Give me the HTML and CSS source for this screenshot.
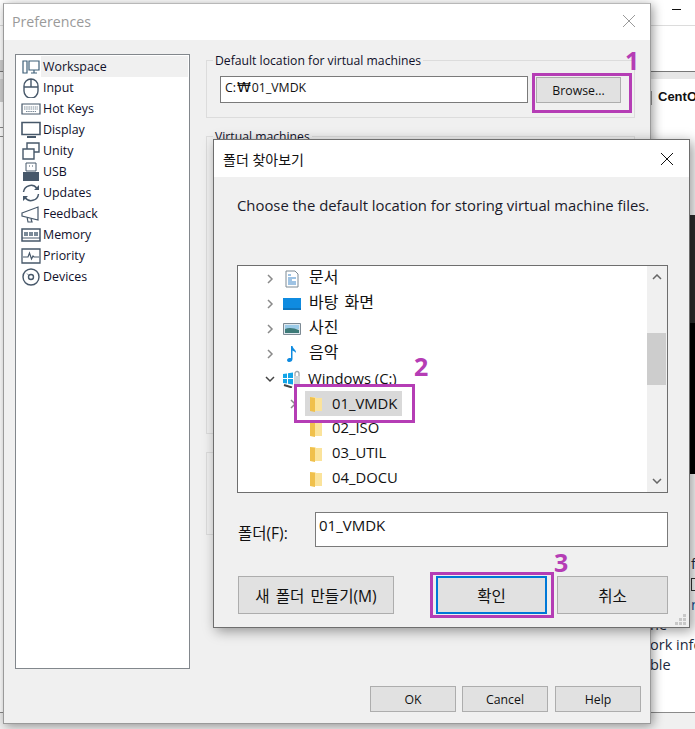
FILE: index.html
```html
<!DOCTYPE html>
<html lang="ko">
<head>
<meta charset="utf-8">
<title>Preferences</title>
<link rel="stylesheet" href="styles.css">
</head>
<body>
<div class="desktop">

  <div class="backwin">
    <div class="back-title"><span class="back-min"></span></div>
    <div class="back-toolbar"></div>
    <div class="back-band"></div>
    <div class="back-content">
      <div class="back-vm"><span class="back-tick"></span><b>CentOS</b></div>
      <div class="back-dark"></div>
      <div class="back-black"></div>
      <div class="back-edge back-f">f</div>
      <div class="back-edge back-box"></div>
      <div class="back-edge back-n">n</div>
      <div class="back-text">ne</div>
      <div class="back-text">ork info</div>
      <div class="back-text">ble</div>
    </div>
  </div>

  <section class="prefs">
    <header class="prefs-title">
      <span>Preferences</span>
      <svg class="x" width="14" height="14" viewBox="0 0 14 14"><path d="M1 1l12 12M13 1L1 13" stroke="#9a9a9a" fill="none"/></svg>
    </header>
    <div class="prefs-body">
      <div class="prefs-top">
        <ul class="side">
          <li class="side-row current"><svg class="si" viewBox="0 0 20 20"><path d="M2 4h4v12H2zM8 4h10v9H8zM13 13v3M10 16h6" fill="none" stroke="#3f6079" stroke-width="1.2"/></svg><span class="side-label">Workspace</span></li>
          <li class="side-row"><svg class="si" viewBox="0 0 20 20"><path d="M3 8a7 7 0 0 1 14 0v5a7 7 0 0 1-14 0zM3 9h14M10 1v8" fill="none" stroke="#47586a" stroke-width="1.4"/></svg><span class="side-label">Input</span></li>
          <li class="side-row"><svg class="si" viewBox="0 0 20 20"><path d="M1 5h18v10H1z" fill="#fff" stroke="#47586a" stroke-width="1.2"/><path d="M3 8h14M3 10h14M5 12.500h10" stroke="#7a8a98" stroke-dasharray="1.500 .7" fill="none"/></svg><span class="side-label">Hot Keys</span></li>
          <li class="side-row"><svg class="si" viewBox="0 0 20 20"><path d="M1 2.500h18v12H1z" fill="none" stroke="#47586a" stroke-width="1.600"/><path d="M6 17h9" stroke="#47586a" stroke-width="2"/></svg><span class="side-label">Display</span></li>
          <li class="side-row"><svg class="si" viewBox="0 0 20 20"><path d="M2 8h11v10H2z" fill="#fff" stroke="#47586a" stroke-width="1.400"/><path d="M6 8V2h12v9h-5" fill="none" stroke="#47586a" stroke-width="1.400"/></svg><span class="side-label">Unity</span></li>
          <li class="side-row"><svg class="si" viewBox="0 0 20 20"><path d="M5 1h10v8H5z" fill="#fff" stroke="#47586a"/><path d="M8 4h1M11 4h1" stroke="#47586a"/><path d="M2 10h16v9H2z" fill="#47586a"/></svg><span class="side-label">USB</span></li>
          <li class="side-row"><svg class="si" viewBox="0 0 20 20"><path d="M2.500 9A7.500 7.500 0 0 1 16 5.500M17.500 11A7.500 7.500 0 0 1 4 14.500" fill="none" stroke="#47586a" stroke-width="1.500"/><path d="M18 2v5h-5zM2 18v-5h5z" fill="#47586a"/></svg><span class="side-label">Updates</span></li>
          <li class="side-row"><svg class="si" viewBox="0 0 20 20"><path d="M1 9l16-6v13L1 12zM6 13l1 5h4l-1-3" fill="#fff" stroke="#47586a" stroke-width="1.200"/></svg><span class="side-label">Feedback</span></li>
          <li class="side-row"><svg class="si" viewBox="0 0 20 20"><path d="M1 4h18v12H1z" fill="#fff" stroke="#47586a" stroke-width="1.500"/><path d="M3 7h4v4H3zM8 7h4v4H8zM13 7h4v4h-4z" fill="#7a8a98"/><path d="M1 13h18" stroke="#47586a"/></svg><span class="side-label">Memory</span></li>
          <li class="side-row"><svg class="si" viewBox="0 0 20 20"><path d="M1 3h18v14H1z" fill="#fff" stroke="#47586a" stroke-width="1.300"/><path d="M2 11h5l1.500-4 2 6 1.500-3 1 1h5" fill="none" stroke="#47586a" stroke-width="1.200"/></svg><span class="side-label">Priority</span></li>
          <li class="side-row"><svg class="si" viewBox="0 0 20 20"><circle cx="10" cy="10" r="8" fill="#fff" stroke="#47586a" stroke-width="1.400"/><circle cx="10" cy="10" r="2.500" fill="none" stroke="#47586a" stroke-width="1.400"/><path d="M6 6.500l1.500 1.500" stroke="#7a8a98"/></svg><span class="side-label">Devices</span></li>
        </ul>
        <div class="groups">
          <fieldset class="group group-loc">
            <legend>Default location for virtual machines</legend>
            <div class="loc-row">
              <div class="field loc-field">C:<span class="won">₩</span>01_VMDK</div>
              <button class="btn browse" type="button">Browse...</button>
            </div>
          </fieldset>
          <fieldset class="group group-vms">
            <legend>Virtual machines</legend>
          </fieldset>
          <div class="group group-third"></div>
        </div>
      </div>
      <footer class="prefs-foot">
        <button class="btn foot-btn" type="button">OK</button>
        <button class="btn foot-btn" type="button">Cancel</button>
        <button class="btn foot-btn foot-help" type="button">Help</button>
      </footer>
    </div>
  </section>

  <section class="dlg">
    <header class="dlg-title">
      <span>폴더 찾아보기</span>
      <svg class="x" width="14" height="14" viewBox="0 0 14 14"><path d="M1 1l12 12M13 1L1 13" stroke="#111" fill="none"/></svg>
    </header>
    <div class="dlg-body">
      <p class="dlg-msg">Choose the default location for storing virtual machine files.</p>
      <div class="tree">
        <ul class="tree-rows">
          <li class="t-row"><svg class="chev" viewBox="0 0 10 10"><path d="M3 1l4 4-4 4" fill="none" stroke="#8a8a8a" stroke-width="1.500"/></svg><svg class="ti" viewBox="0 0 18 18"><path d="M3 1h9l3 3v13H3z" fill="#fff" stroke="#7d8a94"/><path d="M5 5h3M5 8h8M5 10h4M5 12h8M5 14h8" stroke="#3f87c8"/></svg><span class="t-label ko">문서</span></li>
          <li class="t-row"><svg class="chev" viewBox="0 0 10 10"><path d="M3 1l4 4-4 4" fill="none" stroke="#8a8a8a" stroke-width="1.500"/></svg><svg class="ti" viewBox="0 0 18 18"><path d="M0 3h18v12H0z" fill="#0f8be0"/><path d="M0 14h18" stroke="#0a5f9e"/></svg><span class="t-label ko">바탕 화면</span></li>
          <li class="t-row"><svg class="chev" viewBox="0 0 10 10"><path d="M3 1l4 4-4 4" fill="none" stroke="#8a8a8a" stroke-width="1.500"/></svg><svg class="ti" viewBox="0 0 18 18"><path d="M.5 3.500h17v11H.5z" fill="#dfe8ee" stroke="#7d8a94"/><path d="M2 5h14v4H2z" fill="#9ccbe8"/><path d="M2 9c4-2 9-1 14 1v3H2z" fill="#3d7a78"/></svg><span class="t-label ko">사진</span></li>
          <li class="t-row"><svg class="chev" viewBox="0 0 10 10"><path d="M3 1l4 4-4 4" fill="none" stroke="#8a8a8a" stroke-width="1.500"/></svg><svg class="ti" viewBox="0 0 18 18"><path d="M8 1h1.500c.5 3 4 4 3.500 7-1-1.500-2.500-2-3.500-2.500V14c0 2-2 3.500-4 3-2-.5-2-3 0-3.800.8-.3 1.800-.3 2.500 0z" fill="#0f8be0"/></svg><span class="t-label ko">음악</span></li>
          <li class="t-row"><svg class="chev" viewBox="0 0 10 10"><path d="M1 3l4 4 4-4" fill="none" stroke="#444" stroke-width="1.500"/></svg><svg class="ti" viewBox="0 0 18 18"><path d="M0 4l4-.6V8H0zM5 3.300L10 2.500V8H5zM0 9h4v4.600L0 13zM5 9h5v5.500L5 13.700z" fill="#12a5e8"/><path d="M11 6h6v9h-6z" fill="#cfd6da"/><path d="M12 6V3.500a2 2 0 0 1 4 0V6" fill="none" stroke="#9aa4aa" stroke-width="1.300"/><path d="M1 15l8 2.500" stroke="#444" stroke-width="2"/></svg><span class="t-label drive">Windows (C:)</span></li>
          <li class="t-row t-child selected"><svg class="chev" viewBox="0 0 10 10"><path d="M3 1l4 4-4 4" fill="none" stroke="#8a8a8a" stroke-width="1.500"/></svg><svg class="fi" viewBox="0 0 12 16"><path d="M0 1h5l1 1h6v13H0z" fill="#fbe39b"/><path d="M0 1l5 1v14l-5-1z" fill="#f0c04c"/></svg><span class="t-label">01_VMDK</span></li>
          <li class="t-row t-child"><span class="chev"></span><svg class="fi" viewBox="0 0 12 16"><path d="M0 1h5l1 1h6v13H0z" fill="#fbe39b"/><path d="M0 1l5 1v14l-5-1z" fill="#f0c04c"/></svg><span class="t-label">02_ISO</span></li>
          <li class="t-row t-child"><span class="chev"></span><svg class="fi" viewBox="0 0 12 16"><path d="M0 1h5l1 1h6v13H0z" fill="#fbe39b"/><path d="M0 1l5 1v14l-5-1z" fill="#f0c04c"/></svg><span class="t-label">03_UTIL</span></li>
          <li class="t-row t-child"><span class="chev"></span><svg class="fi" viewBox="0 0 12 16"><path d="M0 1h5l1 1h6v13H0z" fill="#fbe39b"/><path d="M0 1l5 1v14l-5-1z" fill="#f0c04c"/></svg><span class="t-label">04_DOCU</span></li>
        </ul>
        <div class="scroll">
          <svg class="arrow" viewBox="0 0 10 6"><path d="M1 5l4-4 4 4" fill="none" stroke="#666" stroke-width="1.500"/></svg>
          <div class="scroll-gap-top"></div>
          <div class="thumb"></div>
          <div class="scroll-gap-bot"></div>
          <svg class="arrow" viewBox="0 0 10 6"><path d="M1 1l4 4 4-4" fill="none" stroke="#666" stroke-width="1.500"/></svg>
        </div>
      </div>
      <div class="folder-row">
        <label class="folder-label">폴더(F):</label>
        <div class="field folder-field">01_VMDK</div>
      </div>
      <div class="dlg-buttons">
        <button class="btn dlg-btn new-btn" type="button">새 폴더 만들기(M)</button>
        <button class="btn dlg-btn ok-btn" type="button">확인</button>
        <button class="btn dlg-btn cancel-btn" type="button">취소</button>
      </div>
      <svg class="grip" width="12" height="12" viewBox="0 0 12 12"><path d="M8 0h3v3H8zM4 4h3v3H4zM8 4h3v3H8zM0 8h3v3H0zM4 8h3v3H4zM8 8h3v3H8z" fill="#c8c8c8"/></svg>
    </div>
  </section>

  <div class="mark mark-browse"></div>
  <div class="mark mark-folder"></div>
  <div class="mark mark-ok"></div>
  <span class="num num-1">1</span>
  <span class="num num-2">2</span>
  <span class="num num-3">3</span>
</div>
</body>
</html>
```

FILE: styles.css
```css
* { box-sizing: border-box; }
html, body { margin: 0; padding: 0; }
body {
  width: 695px;
  height: 729px;
  overflow: hidden;
  font-family: "Open Sans", "Noto Sans CJK KR", sans-serif;
  font-size: 12.3px;
  color: #111;
}
ul { list-style: none; margin: 0; padding: 0; }
.desktop { position: relative; width: 695px; height: 729px; background: #f0f0f0; overflow: hidden; }

/* window behind */
.backwin { position: absolute; left: 0; top: 0; width: 695px; height: 713px; background: #fff; border-bottom: 1px solid #8a8a8a; display: flex; flex-direction: column; }
.back-title { height: 26px; border-bottom: 1px solid #dcdcdc; display: flex; justify-content: flex-end; padding: 9px 14px 0 0; }
.back-min { width: 9px; height: 1px; background: #111; }
.back-toolbar { height: 45px; background: linear-gradient(#cfcfcf, #cfcfcf) 0 34px / 3px 11px no-repeat; }
.back-band { height: 8px; background: #e6e6e6; border-top: 1px solid #777; }
.back-content {
  flex: 1;
  padding-left: 650px;
  display: flex;
  flex-direction: column;
  background:
    linear-gradient(#cfcfcf, #cfcfcf) 0 0 / 3px 23px no-repeat,
    linear-gradient(#8a8a8a, #8a8a8a) 0 48px / 3px 1px no-repeat,
    linear-gradient(#8a8a8a, #8a8a8a) 0 57px / 3px 1px no-repeat;
}
.back-vm { height: 136px; padding: 9px 0 0 8px; font-size: 13px; line-height: 18px; white-space: nowrap; position: relative; font-family: "Liberation Sans", sans-serif; }
.back-tick { position: absolute; left: 0; top: 12px; width: 2px; height: 14px; background: #999; }
.back-dark { height: 108px; margin-left: 39px; background: #2d2d2d; }
.back-black { height: 151px; margin-left: 39px; background: #000; }
.back-edge { margin-left: 41px; height: 20px; font-size: 14.5px; line-height: 20px; }
.back-f { margin-top: 80px; color: #1c2a40; }
.back-box { width: 12px; height: 13px; margin-top: 4px; border: 1px solid #333; }
.back-n { color: #1a4f94; margin-top: 4px; }
.back-text { height: 20px; font-size: 14.5px; line-height: 20px; color: #1c2a40; white-space: nowrap; }

/* preferences window */
.prefs { position: absolute; left: 3px; top: 3px; width: 648px; height: 721px; background: #f0f0f0; border: 1px solid #9a9a9a; border-top-color: #b8b8b8; box-shadow: 2px 2px 10px rgba(0,0,0,.4); display: flex; flex-direction: column; }
.prefs-title { height: 36px; flex: none; background: #fff; display: flex; align-items: center; justify-content: space-between; padding: 0 14px 2px 8px; font-size: 14.2px; color: #9a9a9a; }
.prefs-body { flex: 1; display: flex; flex-direction: column; padding: 11px 9px 0 11px; }
.prefs-top { display: flex; height: 618px; gap: 16px; }
.side { width: 175px; height: 615px; margin-top: 3px; border: 1px solid #82878c; background: #fff; padding: 1px 1px 0 0; font-size: 12.4px; }
.side-row { height: 21px; display: flex; align-items: center; }
.si { width: 20px; height: 20px; margin-left: 5px; flex: none; }
.side-label { flex: 1; height: 21px; line-height: 21px; padding-left: 2px; color: #10102a; }
.current .side-label { background: #f0f0f0; }
.groups { width: 429px; display: flex; flex-direction: column; }
.group { border: 1px solid #dcdcdc; margin: 0; padding: 0; min-width: 0; }
.group legend { margin-left: 6px; padding: 2px 2px 0; line-height: 16px; font-size: 12.2px; color: #10102a; }
.group-loc { height: 67px; flex: none; }
.group-vms { height: 307px; margin-top: 9px; flex: none; }
.group-third { height: 83px; margin-top: 18px; flex: none; }
.loc-row { display: flex; gap: 8px; align-items: flex-start; margin: 7px 13px 0; }
.field { background: #fff; border: 1px solid #7a7a7a; color: #111; white-space: nowrap; }
.loc-field { width: 308px; height: 27px; padding: 2px 4px; line-height: 18px; }
.won { font-family: "DejaVu Sans", sans-serif; font-size: 14px; line-height: 1; margin: 0 1px; }
.btn { background: #e1e1e1; border: 1px solid #adadad; font: inherit; color: #111; padding: 0; margin: 0; }
.browse { width: 85px; height: 26px; margin-top: 1px; }
.prefs-foot { display: flex; justify-content: flex-end; gap: 6px; margin-top: 17px; }
.foot-btn { width: 86px; height: 26px; }
.foot-help { margin-left: 1px; }

/* folder dialog */
.dlg { position: absolute; left: 213px; top: 139px; width: 477px; height: 489px; background: #f0f0f0; border: 1px solid #6e6e6e; box-shadow: 3px 3px 12px rgba(0,0,0,.4); display: flex; flex-direction: column; }
.dlg-title { height: 37px; flex: none; background: #fff; display: flex; align-items: center; justify-content: space-between; padding: 0 15px 0 9px; font-size: 14px; color: #111; }
.dlg-body { flex: 1; padding: 18px 0 0 23px; position: relative; display: flex; flex-direction: column; }
.dlg-msg { margin: 0; font-size: 14.85px; line-height: 20px; height: 70px; white-space: nowrap; color: #1a1a2a; }
.tree { width: 431px; height: 228px; flex: none; background: #fff; border: 1px solid #6e6e6e; display: flex; }
.tree-rows { flex: 1; }
.t-row { height: 25px; display: flex; align-items: center; padding-left: 27px; font-size: 14.8px; line-height: 20px; color: #111; position: relative; }
.chev { width: 10px; height: 10px; flex: none; margin-right: 8px; }
.ti { width: 18px; height: 18px; flex: none; margin-right: 7px; }
.fi { width: 12px; height: 16px; flex: none; margin-right: 10px; }
.t-label { white-space: nowrap; margin-top: -3px; }
.drive { margin-top: -2px; }
.ko { font-size: 16px; word-spacing: 2px; margin: -3px 0 0 1px; }
.t-child { padding-left: 50px; }
.t-child .chev { margin-right: 12px; }
.selected { background: linear-gradient(#d9d9d9, #d9d9d9) 67px 0 / 97px 25px no-repeat; }
.selected .t-label { margin-top: -1px; }
.scroll { width: 20px; background: #f0f0f0; display: flex; flex-direction: column; align-items: center; padding: 8px 1px 8px 0; }
.arrow { width: 10px; height: 6px; flex: none; }
.scroll-gap-top { height: 53px; flex: none; }
.thumb { width: 19px; height: 52px; flex: none; background: #cdcdcd; }
.scroll-gap-bot { flex: 1; }
.folder-row { display: flex; align-items: flex-start; margin-top: 19px; }
.folder-label { width: 78px; margin-top: 11px; padding-left: 1px; font-size: 15.5px; line-height: 20px; flex: none; }
.folder-field { width: 353px; height: 35px; padding: 2px 3px; font-size: 15px; line-height: 20px; }
.dlg-buttons { display: flex; margin-top: 29px; }
.dlg-btn { height: 38px; font-size: 15.6px; word-spacing: 2px; }
.new-btn { width: 156px; margin-left: 1px; margin-right: 42px; }
.ok-btn { width: 111px; margin-right: 10px; border: 2px solid #0078d7; }
.cancel-btn { width: 111px; }
.grip { position: absolute; right: 2px; bottom: 1px; }

/* annotations */
.mark { position: absolute; border: 3px solid #b53db5; }
.mark-browse { left: 532px; top: 73px; width: 100px; height: 40px; }
.mark-folder { left: 294px; top: 384px; width: 121px; height: 39px; }
.mark-ok { left: 430px; top: 572px; width: 124px; height: 46px; }
.num { position: absolute; color: #b53db5; font-family: "Noto Sans", sans-serif; font-weight: 700; font-size: 25px; line-height: 24px; }
.num-1 { left: 625px; top: 48px; }
.num-2 { left: 414px; top: 354px; }
.num-3 { left: 554px; top: 550px; }
```
